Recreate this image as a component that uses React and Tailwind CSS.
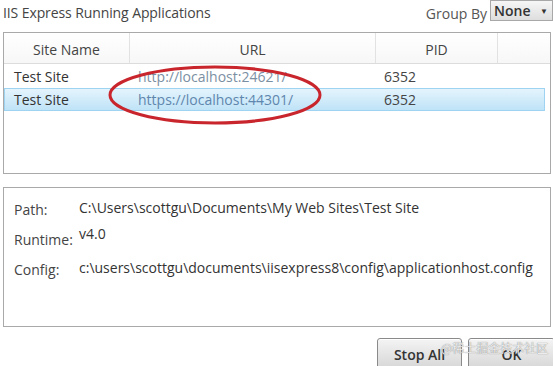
import React from 'react';

const rows = [
  { name: 'Test Site', url: 'http://localhost:24621/', pid: '6352', selected: false },
  { name: 'Test Site', url: 'https://localhost:44301/', pid: '6352', selected: true },
];

const details = [
  { label: 'Path:', value: 'C:\\Users\\scottgu\\Documents\\My Web Sites\\Test Site' },
  { label: 'Runtime:', value: 'v4.0', raised: true },
  { label: 'Config:', value: 'c:\\users\\scottgu\\documents\\iisexpress8\\config\\applicationhost.config' },
];

export default function App() {
  return (
    <div className="relative w-[553px] h-[366px] overflow-hidden bg-white text-[#3a3a3a] font-['Open_Sans',sans-serif] text-[14px]">
      {/* Title bar */}
      <div className="flex h-[32px] items-start justify-between pl-[3px]">
        <div className="pt-[2px] tracking-[-0.1px] text-[#444]">IIS Express Running Applications</div>
        <div className="flex items-start">
          <span className="pt-[3px] pr-[3px] text-[#555]">Group By</span>
          <div className="flex h-[21px] w-[63px] items-center justify-between border border-[#a8a8a8] bg-gradient-to-b from-[#f6f6f6] to-[#dedede] pl-[3px] pr-[4px] font-semibold text-[#333]">
            <span>None</span>
            <span className="text-[8px]">▼</span>
          </div>
        </div>
      </div>

      {/* Applications list */}
      <div className="relative mx-[3px] mr-[2px] h-[142px] border border-[#a9a9a9] shadow-[inset_0_1px_0_#e4e4e4]">
        <div className="grid h-[31px] grid-cols-[126px_246px_122px_1fr] border-b border-[#dcdcdc] bg-gradient-to-b from-white to-[#f7f7f7] text-[#444]">
          <div className="flex items-center justify-center border-r border-[#e2e2e2] pt-[2px]">Site Name</div>
          <div className="flex items-center justify-center border-r border-[#e2e2e2] pt-[2px]">URL</div>
          <div className="flex items-center justify-center border-r border-[#e2e2e2] pt-[2px]">PID</div>
          <div />
        </div>
        <div className="pt-[1px] pr-[5px]">
          {rows.map((r, i) => (
            <div
              key={i}
              className={
                'grid h-[23px] grid-cols-[126px_246px_122px_1fr] items-center ' +
                (r.selected
                  ? 'border border-[#9fd3f2] bg-gradient-to-b from-[#e4f4fd] to-[#bfe3f7]'
                  : 'border border-transparent')
              }
            >
              <div className="pl-[9px] text-[#333]">{r.name}</div>
              <div className={'pl-[7px] ' + (r.selected ? 'text-[#5f86ad]' : 'text-[#7b8fa3]')}>{r.url}</div>
              <div className="pl-[7px] text-[#444]">{r.pid}</div>
              <div />
            </div>
          ))}
        </div>
        {/* red marker ellipse */}
        <svg className="absolute left-[103px] top-[31px] pointer-events-none" width="216" height="62" viewBox="0 0 216 62">
          <ellipse cx="108" cy="31" rx="105" ry="28" fill="none" stroke="#c9252c" strokeWidth="3" />
        </svg>
      </div>

      {/* Details */}
      <div className="mx-[3px] mr-[2px] mt-[13px] h-[140px] border border-[#a9a9a9] pl-[10px] pt-[6px]">
        {details.map((d, i) => (
          <div key={i} className="flex h-[30px] items-center">
            <span className="w-[65px] text-[#444]">{d.label}</span>
            <span className={'text-[#333] ' + (d.raised ? '-translate-y-[6px]' : '-translate-y-[2px]')}>{d.value}</span>
          </div>
        ))}
      </div>

      {/* Buttons */}
      <div className="mt-[11px] flex justify-end gap-[6px]">
        <button className="h-[32px] w-[85px] rounded-[3px] border border-[#8a8a8a] bg-gradient-to-b from-[#f4f4f4] to-[#d6d6d6] text-[14px] font-semibold text-[#333] shadow-[inset_0_1px_0_#fff]">
          Stop All
        </button>
        <button className="-mr-[2px] h-[32px] w-[87px] rounded-[3px] border border-[#8a8a8a] bg-gradient-to-b from-[#f4f4f4] to-[#d6d6d6] text-[14px] font-semibold text-[#333] shadow-[inset_0_1px_0_#fff]">
          OK
        </button>
      </div>

      {/* watermark */}
      <div className="absolute left-[441px] top-[339px] text-[12px] text-[#ececec] [text-shadow:0_0_1px_#666] font-['Noto_Sans_CJK_SC',sans-serif]">
        @稀土掘金技术社区
      </div>
    </div>
  );
}
